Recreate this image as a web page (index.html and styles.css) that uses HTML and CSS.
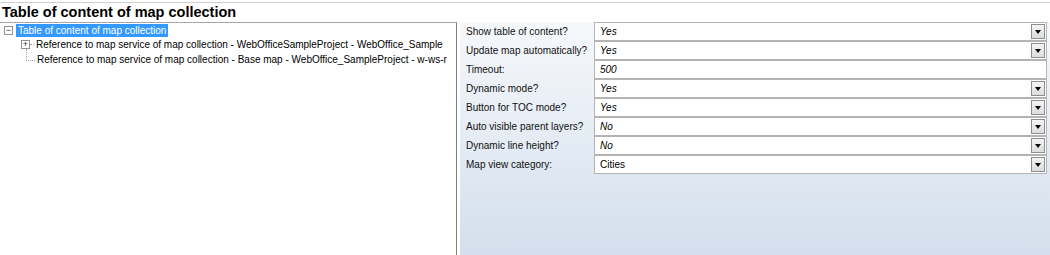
FILE: index.html
```html
<!DOCTYPE html>
<html lang="en">
<head>
  <meta charset="UTF-8" />
  <title>Table of content of map collection</title>
  <link rel="stylesheet" href="styles.css">
</head>
<body>

  <div class="frame">
    <div class="title">Table of content of map collection</div>

    <div class="main">
      <div class="tree">
        <div class="node root">
          <span class="toggle">&minus;</span>
          <span class="label selected">Table of content of map collection</span>
        </div>
        <div class="children">
          <div class="node child first">
            <span class="toggle">+</span>
            <span class="dots"></span>
            <span class="label">Reference to map service of map collection - WebOfficeSampleProject - WebOffice_Sample</span>
          </div>
          <div class="node child last">
            <span class="elbow"></span>
            <span class="label">Reference to map service of map collection - Base map - WebOffice_SampleProject - w-ws-r</span>
          </div>
        </div>
      </div>

      <div class="gap"></div>

      <div class="props">
        <div class="row">
          <div class="name">Show table of content?</div>
          <div class="value italic">Yes<span class="drop"></span></div>
        </div>
        <div class="row">
          <div class="name">Update map automatically?</div>
          <div class="value italic">Yes<span class="drop"></span></div>
        </div>
        <div class="row">
          <div class="name">Timeout:</div>
          <div class="value italic">500</div>
        </div>
        <div class="row">
          <div class="name">Dynamic mode?</div>
          <div class="value italic">Yes<span class="drop"></span></div>
        </div>
        <div class="row">
          <div class="name">Button for TOC mode?</div>
          <div class="value italic">Yes<span class="drop"></span></div>
        </div>
        <div class="row">
          <div class="name">Auto visible parent layers?</div>
          <div class="value italic">No<span class="drop"></span></div>
        </div>
        <div class="row">
          <div class="name">Dynamic line height?</div>
          <div class="value italic">No<span class="drop"></span></div>
        </div>
        <div class="row">
          <div class="name">Map view category:</div>
          <div class="value">Cities<span class="drop"></span></div>
        </div>
      </div>
    </div>
  </div>

</body>
</html>
```

FILE: styles.css
```css
body {
  margin: 0;
  font-family: "Liberation Sans", Arial, sans-serif;
  font-size: 10px;
  color: #000;
  background: #fff;
  overflow: hidden;
}

.frame {
  margin-top: 2px;
  border-top: 1px solid #cfcfcf;
  height: 252px;
  display: flex;
  flex-direction: column;
}

.title {
  font-weight: bold;
  font-size: 14.5px;
  line-height: 19px;
  padding-left: 2px;
  height: 19px;
}

.main {
  flex: 1;
  display: flex;
}

.tree {
  width: 456px;
  border-top: 1px solid #a6a6a6;
  border-right: 1px solid #7f7f7f;
  background: #fff;
  overflow: hidden;
}

.node {
  display: flex;
  align-items: center;
  height: 15px;
  position: relative;
}

.root {
  padding-left: 4px;
  height: 14px;
}

.toggle {
  width: 7px;
  height: 7px;
  border: 1px solid #919191;
  background: #fff;
  color: #333;
  font-size: 9px;
  line-height: 7px;
  text-align: center;
  flex: none;
}

.label {
  white-space: nowrap;
  line-height: 13px;
  padding: 0 2px;
}

.root .label {
  margin-left: 3px;
}

.selected {
  background: #3399ff;
  color: #fff;
}

.child {
  padding-left: 21px;
}

.dots {
  width: 4px;
  border-top: 1px dotted #a0a0a0;
  flex: none;
}

.elbow {
  width: 8px;
  height: 11px;
  margin-left: 5px;
  margin-top: -10px;
  border-left: 1px dotted #a0a0a0;
  border-bottom: 1px dotted #a0a0a0;
  flex: none;
}

.gap {
  width: 3px;
}

.props {
  flex: 1;
  background: linear-gradient(#f6f8fb, #d3dfed);
  padding: 0 3px 0 6px;
}

.row {
  display: flex;
  height: 19px;
}

.name {
  width: 128px;
  line-height: 19px;
  white-space: nowrap;
  color: #111;
}

.value {
  flex: 1;
  background: #fff;
  border: 1px solid #b4b4b4;
  line-height: 17px;
  padding-left: 5px;
  position: relative;
}

.italic {
  font-style: italic;
}

.drop {
  position: absolute;
  right: 1px;
  top: 1px;
  width: 12px;
  height: 13px;
  border: 1px solid #8e8e8e;
  background: linear-gradient(#f4f4f4, #dcdcdc);
}

.drop::after {
  content: "";
  position: absolute;
  left: 3px;
  top: 5px;
  border-left: 3px solid transparent;
  border-right: 3px solid transparent;
  border-top: 4px solid #000;
}
```
